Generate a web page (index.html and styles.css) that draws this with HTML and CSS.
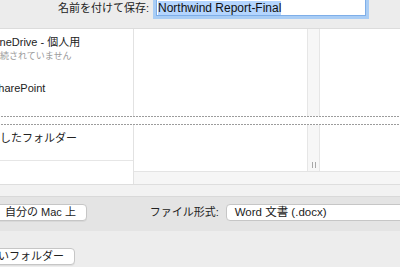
FILE: index.html
```html
<!DOCTYPE html>
<html lang="ja">
<head>
    <meta charset="UTF-8">
    <meta name="viewport" content="width=device-width, initial-scale=1.0">
    <title>名前を付けて保存</title>
    <link rel="stylesheet" href="styles.css">
</head>
<body>

    <div class="dialog">
        <div class="name-bar">
            <label class="name-label">名前を付けて保存:</label>
            <div class="name-input"><span class="selected">Northwind Report-Final</span></div>
        </div>

        <div class="browser">
            <aside class="sidebar">
                <div class="place">OneDrive - 個人用</div>
                <div class="place-note">接続されていません</div>
                <div class="place place-sp">SharePoint</div>
                <div class="place place-recent">最近使用したフォルダー</div>
            </aside>
            <div class="files">
                <div class="columns">
                    <div class="column column-main"></div>
                    <div class="splitter"><span class="grip"></span></div>
                    <div class="column"></div>
                </div>
                <div class="hscroll"></div>
            </div>
            <div class="cut"></div>
        </div>

        <div class="strip"></div>

        <div class="format-bar">
            <button class="btn btn-mac">自分の Mac 上</button>
            <span class="format-label">ファイル形式:</span>
            <div class="format-select">Word 文書 (.docx)</div>
        </div>

        <div class="action-bar">
            <button class="btn btn-folder">新しいフォルダー</button>
        </div>
    </div>

</body>
</html>
```

FILE: styles.css
```css
body {
    margin: 0;
    overflow: hidden;
    font-family: "Liberation Sans", "Noto Sans CJK JP", sans-serif;
    font-size: 11px;
    color: #222;
    background-color: #ededed;
}

.dialog {
    width: 520px;
    margin: -12px 0 0 -50px;
}

/* name row */
.name-bar {
    display: flex;
    align-items: flex-start;
    height: 41px;
    padding-top: 2px;
    box-sizing: border-box;
    background-color: #ececec;
    border-bottom: 1px solid #dcdcdc;
}

.name-label {
    width: 199px;
    margin-top: 11px;
    line-height: 14px;
    text-align: right;
}

.name-input {
    width: 210px;
    height: 26px;
    margin-left: 7px;
    padding: 10px 0 0 1px;
    box-sizing: border-box;
    background-color: white;
    border: 1px solid #7eaee8;
    box-shadow: 0 0 0 3px #a9cdf5;
    font-size: 12px;
    line-height: 14px;
}

.selected {
    display: inline-block;
    background-color: #b4d5fe;
    color: #111;
}

/* browser */
.browser {
    position: relative;
    display: flex;
    height: 155px;
    background-color: white;
    border-bottom: 1px solid #dedede;
}

.sidebar {
    width: 184px;
    box-sizing: border-box;
    border-right: 1px solid #e2e2e2;
    padding-top: 6px;
}

.place {
    padding-left: 41px;
    line-height: 14px;
    white-space: nowrap;
}

.place-note {
    margin-top: 2px;
    padding-left: 41px;
    font-size: 9px;
    line-height: 11px;
    color: #9a9a9a;
}

.place-sp {
    margin-top: 19px;
}

.place-recent {
    margin-top: 36px;
    padding-left: 6px;
    padding-bottom: 15px;
    border-bottom: 1px solid #e6e6e6;
}

.files {
    flex: 1;
    display: flex;
    flex-direction: column;
}

.columns {
    flex: 1;
    display: flex;
}

.column {
    flex: 1;
}

.column-main {
    flex: 0 0 173px;
}

.splitter {
    flex: 0 0 13px;
    display: flex;
    justify-content: center;
    align-items: flex-end;
    padding-bottom: 3px;
    box-sizing: border-box;
    background-color: #f7f7f7;
    border-left: 1px solid #e6e6e6;
    border-right: 1px solid #e6e6e6;
}

.grip {
    width: 2px;
    height: 6px;
    border-left: 1px solid #a8a8a8;
    border-right: 1px solid #a8a8a8;
}

.hscroll {
    height: 12px;
    background-color: #f6f6f6;
    border-top: 1px solid #e4e4e4;
}

.cut {
    position: absolute;
    left: 0;
    right: 0;
    top: 87px;
    height: 9px;
    background:
        repeating-linear-gradient(90deg, #9c9c9c 0 2px, transparent 2px 3px) top / 100% 1px no-repeat,
        repeating-linear-gradient(90deg, #9c9c9c 0 2px, transparent 2px 3px) bottom / 100% 1px no-repeat,
        white;
}

.strip {
    height: 11px;
    background-color: #f2f2f2;
    border-bottom: 1px solid #d9d9d9;
}

/* format row */
.format-bar {
    display: flex;
    align-items: flex-start;
    height: 34px;
    padding-top: 7px;
    box-sizing: border-box;
    background-color: #e4e4e4;
}

.btn {
    height: 17px;
    padding: 0 12px;
    box-sizing: border-box;
    font-family: inherit;
    font-size: 11px;
    line-height: 15px;
    color: #222;
    background-color: white;
    border: 1px solid #c6c6c6;
    border-radius: 4px;
    box-shadow: 0 1px 0 rgba(0, 0, 0, 0.05);
    white-space: nowrap;
}

.btn-mac {
    margin-left: 42px;
    padding-right: 10px;
}

.format-label {
    width: 135px;
    line-height: 17px;
    text-align: right;
    white-space: nowrap;
}

.format-select {
    width: 250px;
    height: 17px;
    margin-left: 7px;
    padding-left: 8px;
    box-sizing: border-box;
    font-size: 11.5px;
    line-height: 15px;
    background-color: white;
    border: 1px solid #c6c6c6;
    border-radius: 4px;
    white-space: nowrap;
}

.action-bar {
    height: 60px;
    padding-top: 17px;
    box-sizing: border-box;
    background-color: #ededed;
}

.btn-folder {
    margin-left: 15px;
    padding: 0 10px;
}
```
